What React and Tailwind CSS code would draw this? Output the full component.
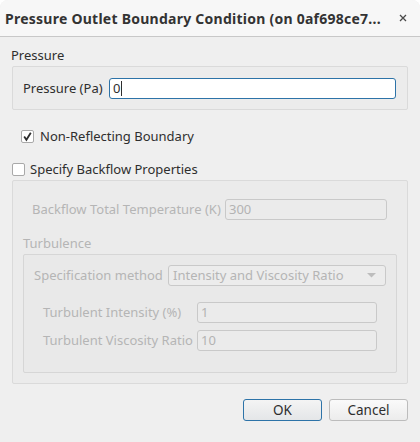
import React from "react";

const font = { fontFamily: '"Noto Sans", "DejaVu Sans", sans-serif' };

function Field({ value, focused, className = "" }) {
  return (
    <div
      className={
        "h-[21px] flex items-center px-[3px] rounded-[3px] text-[13px] " +
        (focused
          ? "border border-[#2d73a8] bg-white text-[#2e2e2e] "
          : "border border-[#c9c9c9] bg-[#ebebeb] text-[#b3b3b3] ") +
        className
      }
    >
      <span>{value}</span>
      {focused && <span className="w-px h-[15px] bg-[#2e2e2e] ml-px" />}
    </div>
  );
}

function Checkbox({ checked }) {
  return (
    <div className="w-[13px] h-[13px] border border-[#a9a9a9] bg-white rounded-[2px] flex items-center justify-center">
      {checked && (
        <svg width="11" height="11" viewBox="0 0 11 11">
          <path d="M2.2 5.6 L4.4 8.8 L8.8 1.8" fill="none" stroke="#2e2e2e" strokeWidth="1.8" />
        </svg>
      )}
    </div>
  );
}

export default function App() {
  return (
    <div className="w-[420px] h-[442px] bg-white" style={font}>
      <div className="w-full h-full bg-[#efefef] rounded-t-[8px] flex flex-col">
        {/* Title bar */}
        <div className="h-[37px] shrink-0 flex items-center justify-between pl-[5px] pr-[13px] bg-[#f7f7f7] rounded-t-[8px] border-b border-[#c8c8c8]">
          <span className="text-[14px] font-bold text-[#333333] tracking-[0.25px]">
            Pressure Outlet Boundary Condition (on 0af698ce7...
          </span>
          <svg width="8" height="8" viewBox="0 0 8 8">
            <path d="M1 1 L7 7 M7 1 L1 7" stroke="#4a4a4a" strokeWidth="1.3" />
          </svg>
        </div>

        <div className="px-[12px] text-[13px] text-[#2e2e2e]">
          {/* Pressure group */}
          <div className="mt-[10px] h-[16px] leading-[16px] -ml-px">Pressure</div>
          <div className="mt-[3px] h-[44px] border border-[#dadada] rounded-[2px] bg-[#ececec] flex items-start pt-[11px] pl-[10px] pr-[11px]">
            <span className="w-[86px] leading-[21px]">Pressure (Pa)</span>
            <Field value="0" focused className="flex-1" />
          </div>

          {/* Non-reflecting */}
          <div className="mt-[20px] ml-[9px] flex items-center gap-[6px] h-[13px]">
            <Checkbox checked />
            <span>Non-Reflecting Boundary</span>
          </div>

          {/* Backflow */}
          <div className="mt-[20px] flex items-center gap-[5px] h-[13px]">
            <Checkbox />
            <span>Specify Backflow Properties</span>
          </div>

          <div className="mt-[4px] h-[204px] border border-[#dadada] rounded-[2px] bg-[#ebebeb] text-[#b5b5b5] px-[10px]">
            <div className="mt-[18px] flex items-center pl-[9px]">
              <span className="w-[193px]">Backflow Total Temperature (K)</span>
              <Field value="300" className="w-[162px]" />
            </div>

            <div className="mt-[15px] leading-[16px]">Turbulence</div>
            <div className="mt-[3px] h-[119px] border border-[#d6d6d6] rounded-[2px] bg-[#e9e9e9] px-[10px]">
              <div className="mt-[10px] flex items-center">
                <span className="w-[134px]">Specification method</span>
                <div className="flex-1 h-[21px] border border-[#c9c9c9] rounded-[3px] bg-[#ececec] flex items-center justify-between pl-[4px] pr-[9px]">
                  <span>Intensity and Viscosity Ratio</span>
                  <svg width="9" height="5" viewBox="0 0 9 5">
                    <path d="M0 0 L9 0 L4.5 4.5 Z" fill="#bdbdbd" />
                  </svg>
                </div>
              </div>
              <div className="mt-[16px] flex items-center pl-[9px] pr-[9px]">
                <span className="w-[154px]">Turbulent Intensity (%)</span>
                <Field value="1" className="flex-1" />
              </div>
              <div className="mt-[7px] flex items-center pl-[9px] pr-[9px]">
                <span className="w-[154px]">Turbulent Viscosity Ratio</span>
                <Field value="10" className="flex-1" />
              </div>
            </div>
          </div>

          {/* Buttons */}
          <div className="mt-[15px] flex justify-end gap-[7px]">
            <button className="w-[79px] h-[22px] border border-[#2d73a8] rounded-[3px] bg-gradient-to-b from-[#f4f4f4] to-[#e4e6e8] text-[13.5px] text-[#2e2e2e]">
              OK
            </button>
            <button className="w-[79px] h-[22px] border border-[#bcbcbc] rounded-[3px] bg-gradient-to-b from-[#fafafa] to-[#ececec] text-[13.5px] text-[#2e2e2e]">
              Cancel
            </button>
          </div>
        </div>
      </div>
    </div>
  );
}
